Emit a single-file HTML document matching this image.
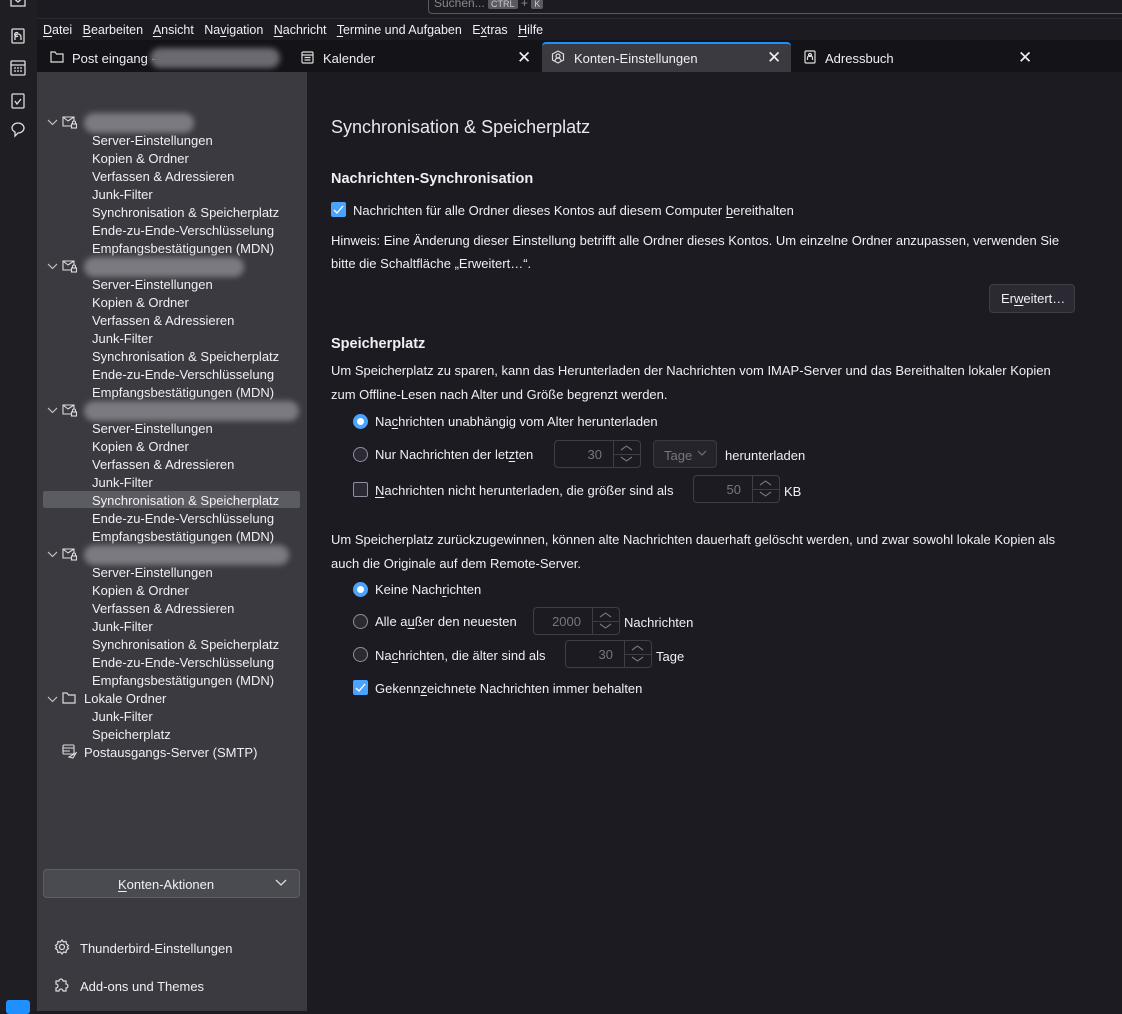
<!DOCTYPE html>
<html><head><meta charset="utf-8"><style>
*{margin:0;padding:0;box-sizing:border-box}
body{width:1122px;height:1011px;background:#1c1b22;font-family:"Liberation Sans",sans-serif;font-size:13px;color:#f0f0f4;position:relative;overflow:hidden}
.a{position:absolute;white-space:nowrap}
u{text-decoration:underline;text-underline-offset:2px}
.spaces{left:0;top:0;width:37px;height:1011px;background:#1f1f23}
.side{left:37px;top:72px;width:270px;height:939px;background:#3a3a40}
.blur{position:absolute;height:20px;border-radius:10px;background:#7a7a80;filter:blur(3px)}
.sel{left:43px;top:491px;width:257px;height:17px;background:#5b5b62;border-radius:2px}
.radio{position:absolute;width:15px;height:15px;border-radius:50%;border:1.5px solid #8f8f9d;background:#2b2a33}
.radio.on{border:4px solid #4aa3ff;background:#fff}
.cb{position:absolute;width:15px;height:15px;border:1px solid #8f8f9d;background:#2b2a33;border-radius:2px}
.cb.on{background:#4aa3ff;border-color:#4aa3ff}
.num{position:absolute;height:28px;border:1px solid #3f3e46;border-radius:4px;color:#77767e;text-align:right}
.num span{position:absolute;top:6px}
.num i{position:absolute;right:0;top:0;width:27px;height:26px;border-left:1px solid #3f3e46;background:
url("data:,") }
.num i:after{content:"";position:absolute;left:0;right:0;top:13px;border-top:1px solid #3f3e46}
.num svg{position:absolute;right:7px;top:4px}
</style></head><body>
<div class="a spaces"></div>
<svg class="a" style="left:10px;top:0" width="17" height="145" fill="none" stroke="#ddd" stroke-width="1.3">
<rect x="1" y="-5" width="14" height="11"/><path d="M1 -4l7 6 7-6"/>
<rect x="2" y="29" width="12" height="14" rx="1"/><path d="M5 40v-3a3 3 0 016 0v3M8 33a2 2 0 100 3"/>
<rect x="1" y="61" width="14" height="14" rx="1"/><path d="M1 65h14M4 68h2M7 68h2M10 68h2M4 71h2M7 71h2M10 71h2"/>
<rect x="2" y="94" width="12" height="14" rx="1"/><path d="M5 101l2 3 4-5"/>
<path d="M2 128a6 5 0 0112 0a6 5 0 01-6 5l-3 3v-4a6 5 0 01-3-4z"/>
</svg>
<div class="a" style="left:6px;top:1000px;width:24px;height:14px;background:#1e90ff;border-radius:3px"></div>
<div class="a" style="left:428px;top:-8px;width:700px;height:22px;border:1px solid #5a5a60;border-radius:4px"></div>
<div class="a" style="left:434px;top:-4px;color:#888;font-size:12px">Suchen... <span style="background:#5a5a62;color:#ccc;font-size:9px;padding:0 3px;border-radius:2px">CTRL</span> + <span style="background:#5a5a62;color:#ccc;font-size:9px;padding:0 3px;border-radius:2px">K</span></div>
<div class="a" style="left:37px;top:18px;width:1085px;height:1px;background:#2a2a30"></div>
<div class="a" style="left:43px;top:23px;font-size:12.5px"><u>D</u>atei&nbsp;&nbsp; <u>B</u>earbeiten&nbsp;&nbsp; <u>A</u>nsicht&nbsp;&nbsp; Na<u>v</u>igation&nbsp;&nbsp; <u>N</u>achricht&nbsp;&nbsp; <u>T</u>ermine und Aufgaben&nbsp;&nbsp; E<u>x</u>tras&nbsp;&nbsp; <u>H</u>ilfe</div>
<div class="a" style="left:37px;top:40px;width:1085px;height:32px;background:#141318"></div>
<svg class="a" style="left:50px;top:51px" width="14" height="12" fill="none" stroke="#ddd" stroke-width="1.2"><path d="M1 1h4l1.5 2H13v8H1z"/></svg>
<div class="a" style="left:72px;top:51px">Post eingang -</div>
<div class="blur" style="left:150px;top:48px;width:130px;background:#6a6a70"></div>
<svg class="a" style="left:301px;top:51px" width="13" height="13" fill="none" stroke="#ddd" stroke-width="1.2"><rect x="1" y="1" width="11" height="11" rx="1"/><path d="M1 4h11M3.5 6.5h6M3.5 9h6"/></svg>
<div class="a" style="left:323px;top:51px">Kalender</div>
<div class="a" style="left:517px;top:48px;font-size:17px">✕</div>
<div class="a" style="left:542px;top:42px;width:249px;height:30px;background:#3a3a40;border-radius:4px 4px 0 0;border-top:2px solid #1f8fff"></div>
<svg class="a" style="left:551px;top:50px" width="14" height="14" fill="none" stroke="#ddd" stroke-width="1.2"><path d="M7 1l5.5 3v6L7 13 1.5 10V4z"/><circle cx="7" cy="6" r="2"/><path d="M4 11a3 3 0 016 0"/></svg>
<div class="a" style="left:574px;top:51px">Konten-Einstellungen</div>
<div class="a" style="left:767px;top:48px;font-size:17px">✕</div>
<svg class="a" style="left:803px;top:50px" width="13" height="14" fill="none" stroke="#ddd" stroke-width="1.2"><rect x="2" y="1" width="10" height="12" rx="1"/><path d="M4.5 10v-2a2.5 2.5 0 015 0v2M7 3.5a1.5 1.5 0 100 3a1.5 1.5 0 000-3"/></svg>
<div class="a" style="left:825px;top:51px">Adressbuch</div>
<div class="a" style="left:1018px;top:48px;font-size:17px">✕</div>
<div class="a side"></div>
<div class="a sel"></div>
<div id="tree"></div>
<script>
var items=["Server-Einstellungen","Kopien &amp; Ordner","Verfassen &amp; Adressieren","Junk-Filter","Synchronisation &amp; Speicherplatz","Ende-zu-Ende-Verschlüsselung","Empfangsbestätigungen (MDN)"];
var widths=[110,160,215,205];var h="";
for(var k=0;k<4;k++){var y=114+k*144;
h+='<svg class="a" style="left:47px;top:'+(y+5)+'px" width="11" height="7" fill="none" stroke="#ccc" stroke-width="1.1"><path d="M1 1l4.5 4.5L10 1"/></svg>';
h+='<svg class="a" style="left:62px;top:'+(y+2)+'px" width="16" height="13" fill="none" stroke="#ddd" stroke-width="1.1"><path d="M9 10H1V1h11v4M1 1l5 4 6-4"/><rect x="9.5" y="8" width="5" height="4"/><path d="M10.5 8V6.5a1.5 1.5 0 013 0V8"/></svg>';
h+='<div class="blur" style="left:84px;top:'+(y-1)+'px;width:'+widths[k]+'px"></div>';
for(var i=0;i<7;i++)h+='<div class="a" style="left:92px;top:'+(y+19+i*18)+'px">'+items[i]+'</div>';}
document.getElementById("tree").innerHTML=h;
var sp='<svg width="13" height="18" fill="none" stroke="#77767e" stroke-width="1.1"><path d="M1 5l5.5-4L12 5M1 12l5.5 4L12 12"/></svg>';
window.addEventListener("DOMContentLoaded",function(){document.querySelectorAll(".num").forEach(function(n){n.insertAdjacentHTML("beforeend",sp)})});
</script>
<svg class="a" style="left:47px;top:696px" width="11" height="7" fill="none" stroke="#ccc" stroke-width="1.1"><path d="M1 1l4.5 4.5L10 1"/></svg>
<svg class="a" style="left:62px;top:692px" width="14" height="12" fill="none" stroke="#ddd" stroke-width="1.2"><path d="M1 1h4l1.5 2H13v8H1z"/></svg>
<div class="a" style="left:84px;top:691px">Lokale Ordner</div>
<div class="a" style="left:92px;top:709px">Junk-Filter</div>
<div class="a" style="left:92px;top:727px">Speicherplatz</div>
<svg class="a" style="left:62px;top:744px" width="15" height="15" fill="none" stroke="#ddd" stroke-width="1.1"><rect x="1" y="1" width="11" height="9" rx="1"/><path d="M1 4h11M1 7h7M7 13l7-4-3 5z"/></svg>
<div class="a" style="left:84px;top:745px">Postausgangs-Server (SMTP)</div>
<div class="a" style="left:43px;top:869px;width:257px;height:29px;background:#4a4a51;border:1px solid #5e5e66;border-radius:4px"></div>
<div class="a" style="left:118px;top:877px"><u>K</u>onten-Aktionen</div>
<svg class="a" style="left:275px;top:879px" width="12" height="8" fill="none" stroke="#ddd" stroke-width="1.3"><path d="M1 1l5 5 5-5"/></svg>
<svg class="a" style="left:54px;top:939px" width="16" height="16" fill="none" stroke="#ddd" stroke-width="1.2"><circle cx="8" cy="8" r="2.5"/><path d="M8 1l1.5 2 2.5-.5.5 2.5 2 1.5-1.2 1.5 1.2 1.5-2 1.5-.5 2.5-2.5-.5L8 15l-1.5-2-2.5.5-.5-2.5-2-1.5L2.7 8 1.5 6.5l2-1.5.5-2.5 2.5.5z"/></svg>
<div class="a" style="left:80px;top:941px">Thunderbird-Einstellungen</div>
<svg class="a" style="left:54px;top:976px" width="16" height="17" fill="none" stroke="#ddd" stroke-width="1.2"><path d="M2 5h3a2 2 0 114 0h3v3a2 2 0 110 4v3H9a2 2 0 10-4 0H2v-3a2 2 0 100-4z"/></svg>
<div class="a" style="left:80px;top:979px">Add-ons und Themes</div>
<div class="a" style="left:331px;top:117px;font-size:18px;color:#e8e8ec">Synchronisation &amp; Speicherplatz</div>
<div class="a" style="left:331px;top:171px;font-size:14.5px;font-weight:bold">Nachrichten-Synchronisation</div>
<div class="cb on" style="left:331px;top:202px"></div>
<svg class="a" style="left:333px;top:205px" width="12" height="10" fill="none" stroke="#fff" stroke-width="1.3"><path d="M1 5l3 3 6-7"/></svg>
<div class="a" style="left:353px;top:203px">Nachrichten für alle Ordner dieses Kontos auf diesem Computer <u>b</u>ereithalten</div>
<div class="a" style="left:331px;top:233px">Hinweis: Eine Änderung dieser Einstellung betrifft alle Ordner dieses Kontos. Um einzelne Ordner anzupassen, verwenden Sie</div>
<div class="a" style="left:331px;top:256px">bitte die Schaltfläche „Erweitert…“.</div>
<div class="a" style="left:989px;top:284px;width:86px;height:29px;background:#2b2a33;border:1px solid #3f3e46;border-radius:4px"></div>
<div class="a" style="left:1001px;top:291px">Er<u>w</u>eitert…</div>
<div class="a" style="left:331px;top:336px;font-size:14.5px;font-weight:bold">Speicherplatz</div>
<div class="a" style="left:331px;top:363px">Um Speicherplatz zu sparen, kann das Herunterladen der Nachrichten vom IMAP-Server und das Bereithalten lokaler Kopien</div>
<div class="a" style="left:331px;top:387px">zum Offline-Lesen nach Alter und Größe begrenzt werden.</div>
<div class="radio on" style="left:353px;top:414px"></div>
<div class="a" style="left:375px;top:414px">Na<u>c</u>hrichten unabhängig vom Alter herunterladen</div>
<div class="radio" style="left:353px;top:447px"></div>
<div class="a" style="left:375px;top:447px">Nur Nachrichten der let<u>z</u>ten</div>
<div class="num" style="left:554px;top:440px;width:87px"><span style="right:38px">30</span><i></i></div>
<div class="a" style="left:653px;top:440px;width:64px;height:28px;border:1px solid #3a3940;background:#25242b;border-radius:4px;color:#77767e;padding:7px 0 0 10px">Tage</div>
<svg class="a" style="left:697px;top:450px" width="10" height="6" fill="none" stroke="#77767e" stroke-width="1.1"><path d="M1 1l4 4 4-4"/></svg>
<div class="a" style="left:725px;top:448px">herunterladen</div>
<div class="cb" style="left:353px;top:482px"></div>
<div class="a" style="left:375px;top:483px"><u>N</u>achrichten nicht herunterladen, die größer sind als</div>
<div class="num" style="left:693px;top:475px;width:87px"><span style="right:38px">50</span><i></i></div>
<div class="a" style="left:784px;top:484px">KB</div>
<div class="a" style="left:331px;top:532px">Um Speicherplatz zurückzugewinnen, können alte Nachrichten dauerhaft gelöscht werden, und zwar sowohl lokale Kopien als</div>
<div class="a" style="left:331px;top:556px">auch die Originale auf dem Remote-Server.</div>
<div class="radio on" style="left:353px;top:582px"></div>
<div class="a" style="left:375px;top:582px">Keine Nach<u>r</u>ichten</div>
<div class="radio" style="left:353px;top:614px"></div>
<div class="a" style="left:375px;top:614px">Alle a<u>u</u>ßer den neuesten</div>
<div class="num" style="left:533px;top:607px;width:87px"><span style="right:38px">2000</span><i></i></div>
<div class="a" style="left:624px;top:615px">Nachrichten</div>
<div class="radio" style="left:353px;top:647px"></div>
<div class="a" style="left:375px;top:648px">Na<u>c</u>hrichten, die älter sind als</div>
<div class="num" style="left:565px;top:640px;width:87px"><span style="right:38px">30</span><i></i></div>
<div class="a" style="left:656px;top:649px">Tage</div>
<div class="cb on" style="left:353px;top:680px"></div>
<svg class="a" style="left:355px;top:683px" width="12" height="10" fill="none" stroke="#fff" stroke-width="1.3"><path d="M1 5l3 3 6-7"/></svg>
<div class="a" style="left:375px;top:681px">Gekenn<u>z</u>eichnete Nachrichten immer behalten</div>
</body></html>
